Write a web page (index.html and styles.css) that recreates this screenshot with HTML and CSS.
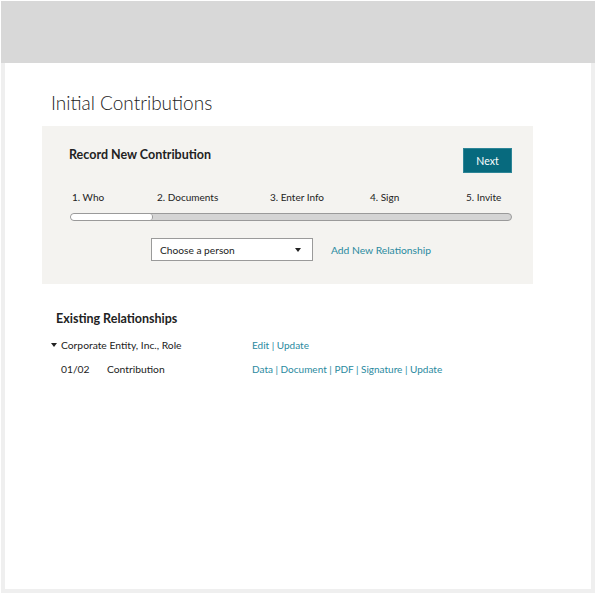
FILE: index.html
```html
<!DOCTYPE html>
<html>
<head>
<meta charset="utf-8">
<link rel="stylesheet" href="styles.css">
</head>
<body>
<div class="frame">
  <header class="topbar"></header>
  <main class="content">
    <h1 class="title">Initial Contributions</h1>
    <section class="panel">
      <div class="panel-head">
        <h2 class="panel-title">Record New Contribution</h2>
        <button class="btn-next">Next</button>
      </div>
      <div class="steps">
        <span class="step">1. Who</span>
        <span class="step">2. Documents</span>
        <span class="step">3. Enter Info</span>
        <span class="step">4. Sign</span>
        <span class="step last">5. Invite</span>
      </div>
      <div class="progress"><div class="progress-fill" style="width:18.3%"></div></div>
      <div class="chooser">
        <div class="select"><span>Choose a person</span><span class="caret"></span></div>
        <a class="link add-link">Add New Relationship</a>
      </div>
    </section>
    <section class="existing">
      <h3 class="existing-title">Existing Relationships</h3>
      <div class="row">
        <div class="col-a"><span class="tri"></span>Corporate Entity, Inc., Role</div>
        <div class="col-b"><a class="link">Edit</a> | <a class="link">Update</a></div>
      </div>
      <div class="row">
        <div class="col-a sub"><span class="date">01/02</span>Contribution</div>
        <div class="col-b"><a class="link">Data</a> | <a class="link">Document</a> | <a class="link">PDF</a> | <a class="link">Signature</a> | <a class="link">Update</a></div>
      </div>
    </section>
  </main>
</div>
</body>
</html>
```
FILE: styles.css
```css
html, body {
  margin: 0;
  padding: 0;
  background: #ffffff;
}
body {
  font-family: Lato, "Open Sans", sans-serif;
  color: #222222;
}
.frame {
  margin: 1px 2px 0 1px;
  display: flex;
  flex-direction: column;
  height: 592px;
}
.topbar {
  height: 62px;
  background: #d8d8d8;
  flex: none;
}
.content {
  flex: 1;
  border: 4px solid #efefef;
  border-top: none;
  padding: 28px 0 0 37px;
}
.title {
  margin: 0 0 11px 9px;
  font-size: 19px;
  font-weight: 300;
  line-height: 24px;
  color: #222;
}
.panel {
  width: 491px;
  height: 158px;
  box-sizing: border-box;
  background: #f4f3f0;
  padding: 21px 21px 0 27px;
}
.panel-head {
  display: flex;
  justify-content: space-between;
  align-items: flex-start;
}
.panel-title {
  margin: 0;
  font-size: 12.5px;
  font-weight: 700;
  line-height: 16px;
}
.btn-next {
  width: 49px;
  height: 25px;
  margin-top: 1px;
  background: #076a7e;
  border: 1px solid #2d8597;
  color: #ffffff;
  font-family: inherit;
  font-size: 10.5px;
  padding: 0;
}
.steps {
  display: grid;
  grid-template-columns: 85px 113px 100px 96px 1fr;
  margin: 17px 0 0 3px;
  font-size: 10px;
  line-height: 14px;
}
.progress {
  margin: 9px 0 0 1px;
  height: 8px;
  box-sizing: border-box;
  border: 1px solid #9a9a9a;
  border-radius: 4px;
  background: #d4d4d4;
  overflow: hidden;
}
.progress-fill {
  height: 100%;
  background: #ffffff;
  border-right: 1px solid #9a9a9a;
  border-radius: 3px;
}
.chooser {
  display: flex;
  align-items: center;
  margin: 17px 0 0 82px;
}
.select {
  width: 162px;
  height: 23px;
  box-sizing: border-box;
  border: 1px solid #9a9a9a;
  background: #fff;
  display: flex;
  align-items: center;
  justify-content: space-between;
  padding: 0 11px 0 8px;
  font-size: 10.2px;
}
.caret {
  width: 0;
  height: 0;
  border-left: 3.5px solid transparent;
  border-right: 3.5px solid transparent;
  border-top: 4px solid #222;
}
.link {
  color: #2a8aa0;
  text-decoration: none;
}
.add-link {
  margin-left: 18px;
  font-size: 10.3px;
}
.existing {
  margin: 27px 0 0 9px;
}
.existing-title {
  margin: 0 0 11px 5px;
  font-size: 12.5px;
  font-weight: 700;
  line-height: 16px;
}
.row {
  display: flex;
  font-size: 10.3px;
  line-height: 14px;
  margin-bottom: 10px;
}
.col-a {
  width: 201px;
  display: flex;
  align-items: center;
}
.col-a.sub {
  padding-left: 10px;
  width: 191px;
}
.date {
  width: 46px;
}
.tri {
  width: 0;
  height: 0;
  border-left: 3.5px solid transparent;
  border-right: 3.5px solid transparent;
  border-top: 4px solid #222;
  margin-right: 4px;
}
.col-b {
  color: #2a8aa0;
  font-size: 10px;
}
```
